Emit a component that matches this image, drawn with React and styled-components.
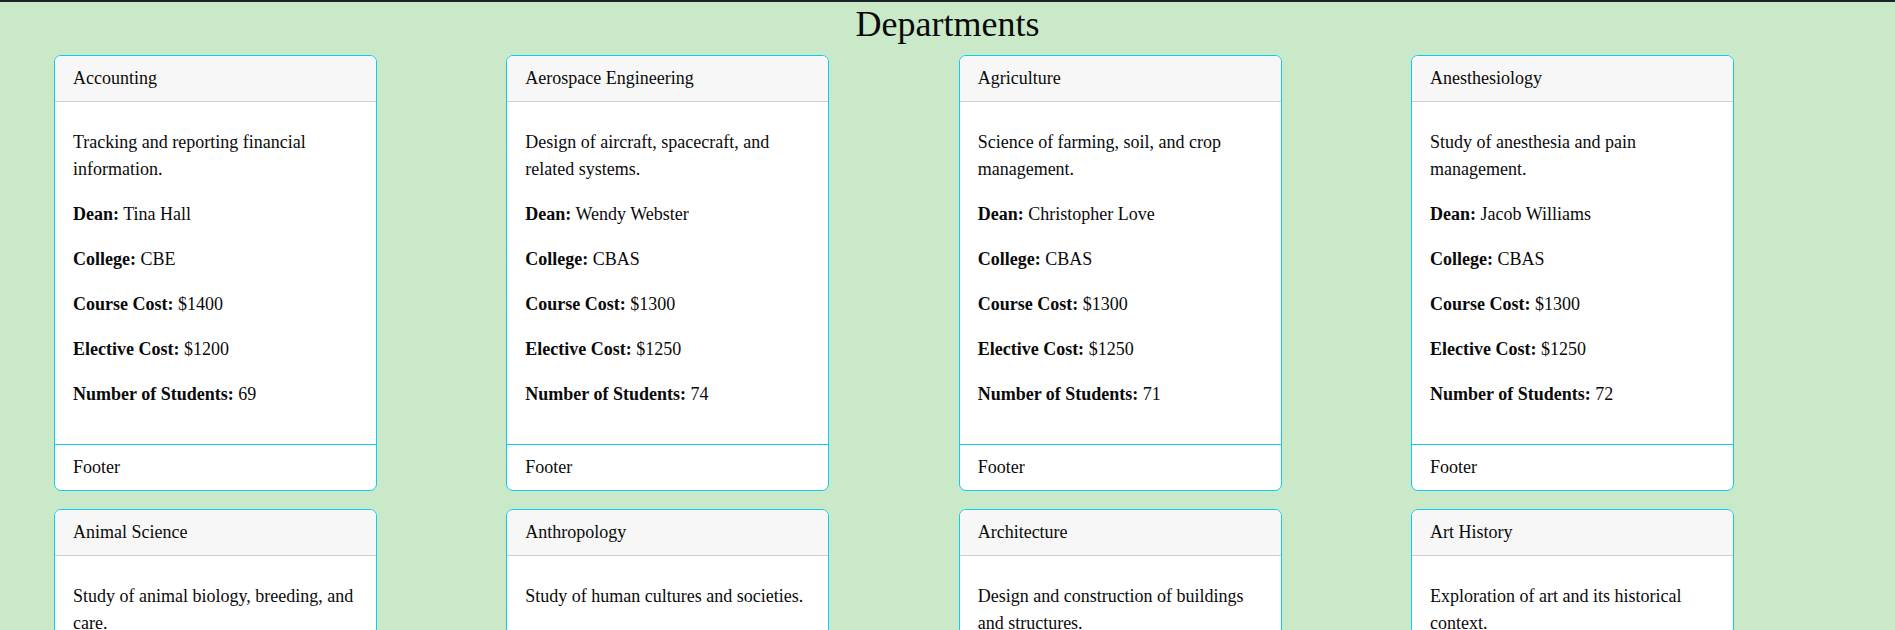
import React from "react";
import styled, { createGlobalStyle } from "styled-components";

const departments = [
    { name: "Accounting", description: "Tracking and reporting financial information.", dean: "Tina Hall", college: "CBE", courseCost: 1400, electiveCost: 1200, students: 69 },
    { name: "Aerospace Engineering", description: "Design of aircraft, spacecraft, and related systems.", dean: "Wendy Webster", college: "CBAS", courseCost: 1300, electiveCost: 1250, students: 74 },
    { name: "Agriculture", description: "Science of farming, soil, and crop management.", dean: "Christopher Love", college: "CBAS", courseCost: 1300, electiveCost: 1250, students: 71 },
    { name: "Anesthesiology", description: "Study of anesthesia and pain management.", dean: "Jacob Williams", college: "CBAS", courseCost: 1300, electiveCost: 1250, students: 72 },
    { name: "Animal Science", description: "Study of animal biology, breeding, and care.", dean: "Laura Martinez", college: "CBAS", courseCost: 1300, electiveCost: 1250, students: 68 },
    { name: "Anthropology", description: "Study of human cultures and societies.", dean: "Daniel Brooks", college: "CHSS", courseCost: 1200, electiveCost: 1100, students: 75 },
    { name: "Architecture", description: "Design and construction of buildings and structures.", dean: "Megan Carter", college: "CBAS", courseCost: 1400, electiveCost: 1300, students: 70 },
    { name: "Art History", description: "Exploration of art and its historical context.", dean: "Steven Reed", college: "CHSS", courseCost: 1200, electiveCost: 1100, students: 66 },
];

const App = () => {
    return (
        <>
            <GlobalStyle />
            <Page>
                <Title>Departments</Title>
                <Grid>
                    {departments.map((d) => (
                        <Card key={d.name}>
                            <CardHeader>{d.name}</CardHeader>
                            <CardBody>
                                <CardTitle />
                                <Text>{d.description}</Text>
                                <Text><strong>Dean:</strong> {d.dean}</Text>
                                <Text><strong>College:</strong> {d.college}</Text>
                                <Text><strong>Course Cost:</strong> ${d.courseCost}</Text>
                                <Text><strong>Elective Cost:</strong> ${d.electiveCost}</Text>
                                <Text><strong>Number of Students:</strong> {d.students}</Text>
                            </CardBody>
                            <CardFooter>Footer</CardFooter>
                        </Card>
                    ))}
                </Grid>
            </Page>
        </>
    );
};

const GlobalStyle = createGlobalStyle`
    * {
        box-sizing: border-box;
    }
    body {
        margin: 0;
        font-family: "Liberation Serif", "Times New Roman", serif;
        font-size: 18px;
        line-height: 27px;
        color: #0a0a0a;
        background-color: #c9e9c9;
    }
`;

const Page = styled.div`
    min-height: 100vh;
    border-top: 2px solid #1d2128;
    background-color: #c9e9c9;
`;

const Title = styled.h1`
    margin: 1px 0 10px;
    text-align: center;
    font-size: 36px;
    font-weight: 400;
    line-height: 42px;
`;

const Grid = styled.div`
    display: grid;
    grid-template-columns: repeat(4, 323px);
    column-gap: 129.33px;
    row-gap: 18px;
    padding: 0 0 18px 54px;
`;

const Card = styled.div`
    display: flex;
    flex-direction: column;
    background-color: #ffffff;
    border: 1px solid #0dcaf0;
    border-radius: 7px;
    overflow: hidden;
`;

const CardHeader = styled.div`
    padding: 9px 18px;
    background-color: #f7f7f7;
    border-bottom: 1px solid #d0d0d0;
`;

const CardBody = styled.div`
    flex: 1;
    padding: 18px;
`;

const CardTitle = styled.h5`
    margin: 0 0 9px;
`;

const Text = styled.p`
    margin: 0 0 18px;
`;

const CardFooter = styled.div`
    padding: 9px 18px;
    border-top: 1px solid #0dcaf0;
`;

export default App;
